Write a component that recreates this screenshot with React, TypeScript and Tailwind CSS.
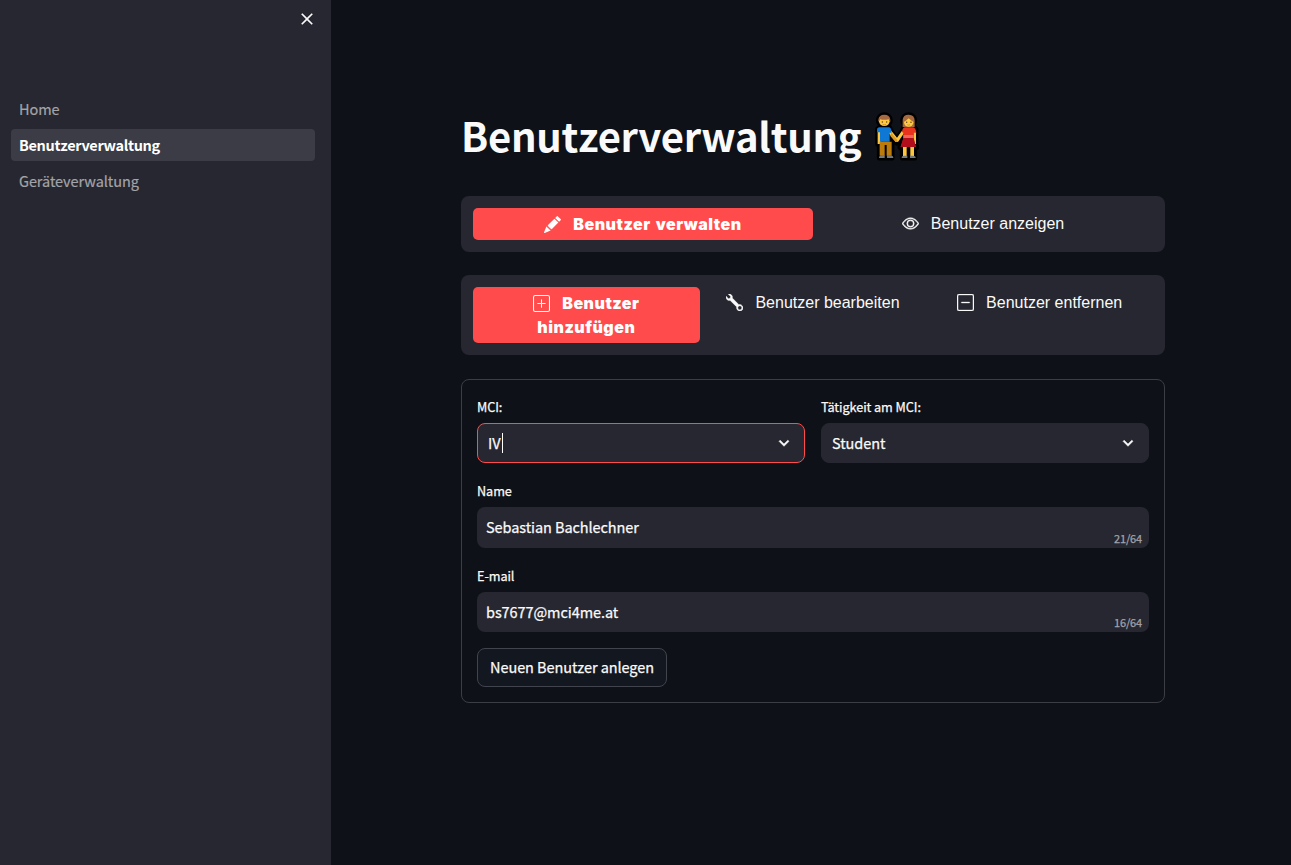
import type { ReactNode } from "react";
import { BsDashSquare, BsEye, BsPencilFill, BsPlusSquare, BsWrench } from "react-icons/bs";

function CoupleEmoji() {
  return (
    <svg width="48" height="52" viewBox="48 33 144 156" className="mt-[2px] ml-[14px] shrink-0">
      <g stroke="#000" strokeWidth="17" strokeLinejoin="round" strokeLinecap="round" fill="#000">
        <ellipse cx="76" cy="61" rx="17" ry="16" />
        <ellipse cx="149" cy="61" rx="17" ry="16" />
        <path d="M57 87L64 82H90L98 98L113 117L128 98L136 82H162L170 88V134L172 142H166V173H131V142H124L129 115L114 128L98 112V173H62V132H57Z" />
      </g>
      <path d="M56 96H65V132H56ZM87 97L97 92L114 113L129 92L137 97L117 126H110ZM163 96H171V132H163Z" fill="#fbc540" />
      <path d="M97 98L113 118L117 126H110L94 108Z" fill="#dc9a20" />
      <path d="M54 97V90Q54 82 62 82H89Q97 82 98 98H92V125H63V97Z" fill="#0f78d4" />
      <path d="M62 125H98V167H83V135H77V167H62Z" fill="#bd7b0b" />
      <path d="M60 174Q60 166 70 166H77V174ZM84 166H92Q103 166 103 174H84Z" fill="#777a7c" />
      <ellipse cx="76" cy="64" rx="16" ry="14" fill="#ffc83d" />
      <path d="M58 65V59Q60 44 76 44Q92 44 94 59V65Q91 64 89 58Q76 61 63 58Q61 64 58 65Z" fill="#a56a43" />
      <circle cx="70" cy="66" r="2.2" fill="#5d4330" />
      <circle cx="83" cy="66" r="2.2" fill="#5d4330" />
      <path d="M71 73Q76 76 81 73" fill="none" stroke="#b98119" strokeWidth="2" />
      <path d="M132 139H143V168H132ZM154 139H165V168H154Z" fill="#fbc540" />
      <path d="M128 174Q128 167 136 167H145V174ZM153 167H161Q170 167 170 174H153Z" fill="#777a7c" />
      <path d="M129 96Q130 82 139 82H160Q170 82 172 98H164V116L170 141H125L133 116V98Z" fill="#e8341f" />
      <path d="M133 105H164V115H133Z" fill="#f0645a" />
      <path d="M133 114H164L171 141H125Z" fill="#b10e1c" />
      <path d="M131 81V60Q132 44 149 44Q167 44 167 62V81Z" fill="#a56a43" />
      <ellipse cx="149" cy="67" rx="14" ry="13" fill="#ffc83d" />
      <path d="M133 66Q136 51 149 49Q162 51 165 66Q158 64 149 55Q140 64 133 66Z" fill="#a56a43" />
      <circle cx="143" cy="67" r="2.2" fill="#5d4330" />
      <circle cx="156" cy="67" r="2.2" fill="#5d4330" />
      <path d="M145 74Q149 77 153 74" fill="none" stroke="#b98119" strokeWidth="2" />
    </svg>
  );
}

function Tab({ icon, active, children }: { icon: ReactNode; active?: boolean; children: ReactNode }) {
  return (
    <div
      className={
        active
          ? "rounded-[5px] bg-[#ff4b4b] px-4 py-1 text-center font-['Inter',sans-serif] text-[16px] leading-6 font-black tracking-[0.5px] text-white [word-spacing:1.5px]"
          : "px-2 py-1 text-center font-['Liberation_Sans',Arial,sans-serif] text-[16px] leading-6 tracking-normal text-[#fafafa]"
      }
    >
      <span className="mr-3 inline-block align-[-3px] text-[17px]">{icon}</span>
      {children}
    </div>
  );
}

function Chevron() {
  return (
    <svg width="20" height="20" viewBox="0 0 24 24" fill="#fafafa" stroke="#fafafa" strokeWidth="0.6">
      <path d="M16.59 8.59L12 13.17 7.41 8.59 6 10l6 6 6-6z" />
    </svg>
  );
}

function Label({ children }: { children: ReactNode }) {
  return <div className="mb-1 h-6 pt-[2px] text-[12.7px] leading-5 tracking-[-0.08px]">{children}</div>;
}

function Select({ label, value, focused }: { label: string; value: string; focused?: boolean }) {
  return (
    <div className="flex-1">
      <Label>{label}</Label>
      <div
        className={
          focused
            ? "flex h-10 items-center rounded-lg border border-[#ff4b4b] bg-[#262730] px-[10px]"
            : "flex h-10 items-center rounded-lg border border-[#262730] bg-[#262730] px-[10px]"
        }
      >
        <span>{value}</span>
        {focused && <span className="ml-[1.6px] h-5 w-px bg-white" />}
        <span className="ml-auto">
          <Chevron />
        </span>
      </div>
    </div>
  );
}

function Field({ label, value, count }: { label: string; value: string; count: string }) {
  return (
    <div>
      <Label>{label}</Label>
      <div className="flex h-[40.5px] items-center justify-between rounded-lg bg-[#262730] pr-[7px] pl-[9px]">
        <span>{value}</span>
        <span className="mt-[21px] text-[11px] leading-4 tracking-[-0.15px] text-[#a3a4a9]">{count}</span>
      </div>
    </div>
  );
}

export default function App() {
  return (
    <div className="flex h-[865px] w-[1291px] overflow-hidden bg-[#0e1117] font-['Noto_Sans_CJK_JP',sans-serif] text-[14.5px] leading-6 tracking-[-0.08px] text-[#fafafa]">
      <aside className="flex w-[331px] shrink-0 flex-col bg-[#262730]">
        <div className="flex h-[93px] justify-end pt-[9px] pr-[14px]">
          <svg width="20" height="20" viewBox="0 0 24 24" fill="#fafafa">
            <path d="M19 6.41L17.59 5 12 10.59 6.41 5 5 6.41 10.59 12 5 17.59 6.41 19 12 13.41 17.59 19 19 17.59 13.41 12z" />
          </svg>
        </div>
        <nav className="flex flex-col gap-1 pr-4 pl-[11px] leading-8 text-[#a3a4a8] [-webkit-text-stroke:0.2px]">
          <a className="h-8 px-2">Home</a>
          <a className="h-8 rounded bg-[#3b3c46] px-2 font-bold tracking-[-0.34px] text-white [-webkit-text-stroke:0]">
            Benutzerverwaltung
          </a>
          <a className="h-8 px-2">Geräteverwaltung</a>
        </nav>
      </aside>
      <main className="ml-[130px] w-[704px] pt-[109px]">
        <h1 className="flex h-[87px] items-start text-[40px] leading-[52px] font-bold tracking-[-0.29px]">
          Benutzerverwaltung
          <CoupleEmoji />
        </h1>
        <div className="grid h-14 grid-cols-2 items-start rounded-lg bg-[#262730] p-3">
          <Tab active icon={<BsPencilFill />}>Benutzer verwalten</Tab>
          <Tab icon={<BsEye strokeWidth={0.4} />}>Benutzer anzeigen</Tab>
        </div>
        <div className="mt-[23px] grid h-20 grid-cols-3 items-start rounded-lg bg-[#262730] p-3">
          <Tab active icon={<BsPlusSquare />}>
            Benutzer
            <br />
            hinzufügen
          </Tab>
          <Tab icon={<BsWrench strokeWidth={0.5} />}>Benutzer bearbeiten</Tab>
          <Tab icon={<BsDashSquare strokeWidth={0.3} />}>Benutzer entfernen</Tab>
        </div>
        <div className="mt-6 flex h-[324px] flex-col gap-4 rounded-lg border border-[#3c3e44] p-[15px] [-webkit-text-stroke:0.25px]">
          <div className="flex gap-4">
            <Select label="MCI:" value="IV" focused />
            <Select label="Tätigkeit am MCI:" value="Student" />
          </div>
          <Field label="Name" value="Sebastian Bachlechner" count="21/64" />
          <Field label="E-mail" value="bs7677@mci4me.at" count="16/64" />
          <button className="h-[39px] w-[190px] rounded-lg border border-[#41444c] bg-[#131720] pb-[2px] whitespace-nowrap">
            Neuen Benutzer anlegen
          </button>
        </div>
      </main>
    </div>
  );
}
